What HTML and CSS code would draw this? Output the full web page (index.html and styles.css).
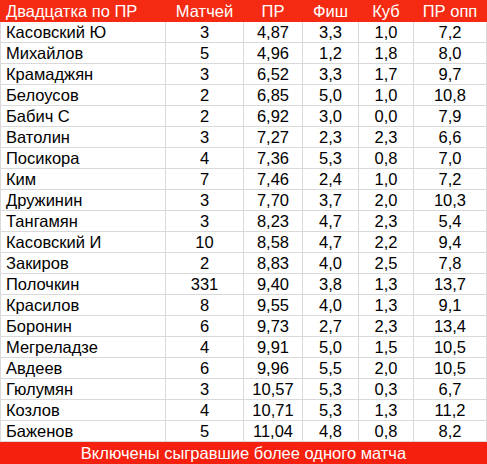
FILE: index.html
```html
<!DOCTYPE html>
<html lang="ru">
<head>
    <meta charset="UTF-8">
    <title>Двадцатка по ПР</title>
    <link rel="stylesheet" href="styles.css">
</head>
<body>
    <table class="stats">
        <colgroup>
            <col class="c-name">
            <col class="c-games">
            <col class="c-pr">
            <col class="c-fish">
            <col class="c-cube">
            <col class="c-opp">
        </colgroup>
        <thead>
            <tr>
                <th class="name">Двадцатка по ПР</th>
                <th>Матчей</th>
                <th>ПР</th>
                <th>Фиш</th>
                <th>Куб</th>
                <th>ПР опп</th>
            </tr>
        </thead>
        <tbody>
            <tr><td class="name">Касовский Ю</td><td>3</td><td>4,87</td><td>3,3</td><td>1,0</td><td>7,2</td></tr>
            <tr><td class="name">Михайлов</td><td>5</td><td>4,96</td><td>1,2</td><td>1,8</td><td>8,0</td></tr>
            <tr><td class="name">Крамаджян</td><td>3</td><td>6,52</td><td>3,3</td><td>1,7</td><td>9,7</td></tr>
            <tr><td class="name">Белоусов</td><td>2</td><td>6,85</td><td>5,0</td><td>1,0</td><td>10,8</td></tr>
            <tr><td class="name">Бабич С</td><td>2</td><td>6,92</td><td>3,0</td><td>0,0</td><td>7,9</td></tr>
            <tr><td class="name">Ватолин</td><td>3</td><td>7,27</td><td>2,3</td><td>2,3</td><td>6,6</td></tr>
            <tr><td class="name">Посикора</td><td>4</td><td>7,36</td><td>5,3</td><td>0,8</td><td>7,0</td></tr>
            <tr><td class="name">Ким</td><td>7</td><td>7,46</td><td>2,4</td><td>1,0</td><td>7,2</td></tr>
            <tr><td class="name">Дружинин</td><td>3</td><td>7,70</td><td>3,7</td><td>2,0</td><td>10,3</td></tr>
            <tr><td class="name">Тангамян</td><td>3</td><td>8,23</td><td>4,7</td><td>2,3</td><td>5,4</td></tr>
            <tr><td class="name">Касовский И</td><td>10</td><td>8,58</td><td>4,7</td><td>2,2</td><td>9,4</td></tr>
            <tr><td class="name">Закиров</td><td>2</td><td>8,83</td><td>4,0</td><td>2,5</td><td>7,8</td></tr>
            <tr><td class="name">Полочкин</td><td>331</td><td>9,40</td><td>3,8</td><td>1,3</td><td>13,7</td></tr>
            <tr><td class="name">Красилов</td><td>8</td><td>9,55</td><td>4,0</td><td>1,3</td><td>9,1</td></tr>
            <tr><td class="name">Боронин</td><td>6</td><td>9,73</td><td>2,7</td><td>2,3</td><td>13,4</td></tr>
            <tr><td class="name">Мегреладзе</td><td>4</td><td>9,91</td><td>5,0</td><td>1,5</td><td>10,5</td></tr>
            <tr><td class="name">Авдеев</td><td>6</td><td>9,96</td><td>5,5</td><td>2,0</td><td>10,5</td></tr>
            <tr><td class="name">Гюлумян</td><td>3</td><td>10,57</td><td>5,3</td><td>0,3</td><td>6,7</td></tr>
            <tr><td class="name">Козлов</td><td>4</td><td>10,71</td><td>5,3</td><td>1,3</td><td>11,2</td></tr>
            <tr><td class="name">Баженов</td><td>5</td><td>11,04</td><td>4,8</td><td>0,8</td><td>8,2</td></tr>
        </tbody>
        <tfoot>
            <tr><td colspan="6" class="note">Включены сыгравшие более одного матча</td></tr>
        </tfoot>
    </table>
</body>
</html>
```

FILE: styles.css
```css
body {
    margin: 0;
    background-color: #fff;
    font-family: "Liberation Sans", Arial, sans-serif;
}

.stats {
    border-collapse: collapse;
    table-layout: fixed;
    width: 486px;
    font-size: 16.5px;
    color: #000;
}

.c-name { width: 165px; }
.c-games { width: 78px; }
.c-pr { width: 59px; }
.c-fish { width: 56px; }
.c-cube { width: 55px; }
.c-opp { width: 73px; }

.stats th,
.stats td {
    height: 20px;
    padding: 0;
    text-align: center;
    font-weight: normal;
    line-height: 20px;
    white-space: nowrap;
    border: 1px solid #d9d9d9;
}

.stats th {
    background-color: #f52a12;
    color: #fff;
    border-color: #f52a12;
}

.stats .name {
    text-align: left;
    padding-left: 5px;
}

.stats tr:first-child td {
    border-top: none;
}

.stats .note {
    height: 22px;
    background-color: #f5200e;
    border-color: #f5200e;
    color: #fff;
}
```
